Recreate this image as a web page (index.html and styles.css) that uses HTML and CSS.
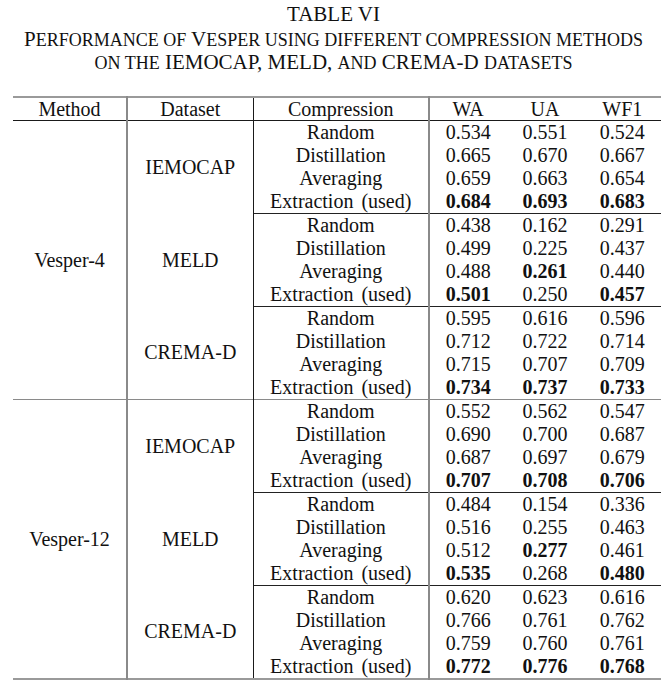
FILE: index.html
```html
<!DOCTYPE html>
<html>
<head>
<meta charset="utf-8">
<link rel="stylesheet" href="styles.css">
</head>
<body>
<div class="caption">
  <div class="cap-title">TABLE VI</div>
  <div class="cap-text">P<span class="sc">erformance of</span> V<span class="sc">esper using different compression methods</span></div>
  <div class="cap-text"><span class="sc">on the</span> IEMOCAP, MELD, <span class="sc">and</span> CREMA-D <span class="sc">datasets</span></div>
</div>
<table class="results">
  <colgroup>
    <col class="c-method"><col class="c-dataset"><col class="c-comp"><col class="c-num"><col class="c-num"><col class="c-num">
  </colgroup>
  <thead>
    <tr><th class="m">Method</th><th class="d">Dataset</th><th class="cp">Compression</th><th class="n">WA</th><th class="n">UA</th><th class="n">WF1</th></tr>
  </thead>
  <tbody class="block">
    <tr><td class="m" rowspan="12">Vesper-4</td><td class="d" rowspan="4">IEMOCAP</td><td class="cp">Random</td><td class="n">0.534</td><td class="n">0.551</td><td class="n">0.524</td></tr>
    <tr><td class="cp">Distillation</td><td class="n">0.665</td><td class="n">0.670</td><td class="n">0.667</td></tr>
    <tr><td class="cp">Averaging</td><td class="n">0.659</td><td class="n">0.663</td><td class="n">0.654</td></tr>
    <tr class="gend"><td class="cp">Extraction (used)</td><td class="n b">0.684</td><td class="n b">0.693</td><td class="n b">0.683</td></tr>
    <tr><td class="d" rowspan="4">MELD</td><td class="cp">Random</td><td class="n">0.438</td><td class="n">0.162</td><td class="n">0.291</td></tr>
    <tr><td class="cp">Distillation</td><td class="n">0.499</td><td class="n">0.225</td><td class="n">0.437</td></tr>
    <tr><td class="cp">Averaging</td><td class="n">0.488</td><td class="n b">0.261</td><td class="n">0.440</td></tr>
    <tr class="gend"><td class="cp">Extraction (used)</td><td class="n b">0.501</td><td class="n">0.250</td><td class="n b">0.457</td></tr>
    <tr><td class="d" rowspan="4">CREMA-D</td><td class="cp">Random</td><td class="n">0.595</td><td class="n">0.616</td><td class="n">0.596</td></tr>
    <tr><td class="cp">Distillation</td><td class="n">0.712</td><td class="n">0.722</td><td class="n">0.714</td></tr>
    <tr><td class="cp">Averaging</td><td class="n">0.715</td><td class="n">0.707</td><td class="n">0.709</td></tr>
    <tr><td class="cp">Extraction (used)</td><td class="n b">0.734</td><td class="n b">0.737</td><td class="n b">0.733</td></tr>
  </tbody>
  <tbody class="block second">
    <tr><td class="m" rowspan="12">Vesper-12</td><td class="d" rowspan="4">IEMOCAP</td><td class="cp">Random</td><td class="n">0.552</td><td class="n">0.562</td><td class="n">0.547</td></tr>
    <tr><td class="cp">Distillation</td><td class="n">0.690</td><td class="n">0.700</td><td class="n">0.687</td></tr>
    <tr><td class="cp">Averaging</td><td class="n">0.687</td><td class="n">0.697</td><td class="n">0.679</td></tr>
    <tr class="gend"><td class="cp">Extraction (used)</td><td class="n b">0.707</td><td class="n b">0.708</td><td class="n b">0.706</td></tr>
    <tr><td class="d" rowspan="4">MELD</td><td class="cp">Random</td><td class="n">0.484</td><td class="n">0.154</td><td class="n">0.336</td></tr>
    <tr><td class="cp">Distillation</td><td class="n">0.516</td><td class="n">0.255</td><td class="n">0.463</td></tr>
    <tr><td class="cp">Averaging</td><td class="n">0.512</td><td class="n b">0.277</td><td class="n">0.461</td></tr>
    <tr class="gend"><td class="cp">Extraction (used)</td><td class="n b">0.535</td><td class="n">0.268</td><td class="n b">0.480</td></tr>
    <tr><td class="d" rowspan="4">CREMA-D</td><td class="cp">Random</td><td class="n">0.620</td><td class="n">0.623</td><td class="n">0.616</td></tr>
    <tr><td class="cp">Distillation</td><td class="n">0.766</td><td class="n">0.761</td><td class="n">0.762</td></tr>
    <tr><td class="cp">Averaging</td><td class="n">0.759</td><td class="n">0.760</td><td class="n">0.761</td></tr>
    <tr><td class="cp">Extraction (used)</td><td class="n b">0.772</td><td class="n b">0.776</td><td class="n b">0.768</td></tr>
  </tbody>
</table>
</body>
</html>
```

FILE: styles.css
```css
html, body {
  margin: 0;
  padding: 0;
  background: #ffffff;
}
body {
  font-family: "Liberation Serif", "Times New Roman", serif;
  color: #111111;
  font-size: 20px;
}
.caption {
  padding-top: 3px;
  text-align: center;
  line-height: 22px;
}
.cap-title {
  font-size: 21px;
  margin-bottom: 3px;
}
.cap-text {
  font-size: 21px;
}
.cap-text .sc {
  text-transform: uppercase;
  font-size: 18px;
}
.results {
  margin: 22px 0 0 13px;
  width: 648px;
  border-collapse: collapse;
  table-layout: fixed;
  line-height: 23px;
}
.c-method { width: 114px; }
.c-dataset { width: 126px; }
.c-comp { width: 176px; }
.results th,
.results td {
  padding: 0;
  height: 23px;
  font-weight: normal;
  white-space: nowrap;
}
.results thead th {
  height: 22px;
  line-height: 21px;
}
.results thead tr {
  border-top: 2px solid #9a9a9a;
  border-bottom: 1px solid #1a1a1a;
}
.results .m {
  text-align: center;
  vertical-align: middle;
  border-right: 2px solid #8a8a8a;
}
.results .d {
  text-align: center;
  vertical-align: middle;
  border-right: 1px solid #1a1a1a;
}
.results .cp {
  text-align: center;
  word-spacing: 3px;
  border-right: 2px solid #8a8a8a;
}
.results .n {
  text-align: center;
}
.results .b {
  font-weight: bold;
}
.results tr.gend td:not(.m) {
  border-bottom: 1px solid #222222;
}
.block.second {
  border-top: 1px solid #8a8a8a;
}
.block.second tr:last-child {
  border-bottom: 2px solid #9a9a9a;
}
```
